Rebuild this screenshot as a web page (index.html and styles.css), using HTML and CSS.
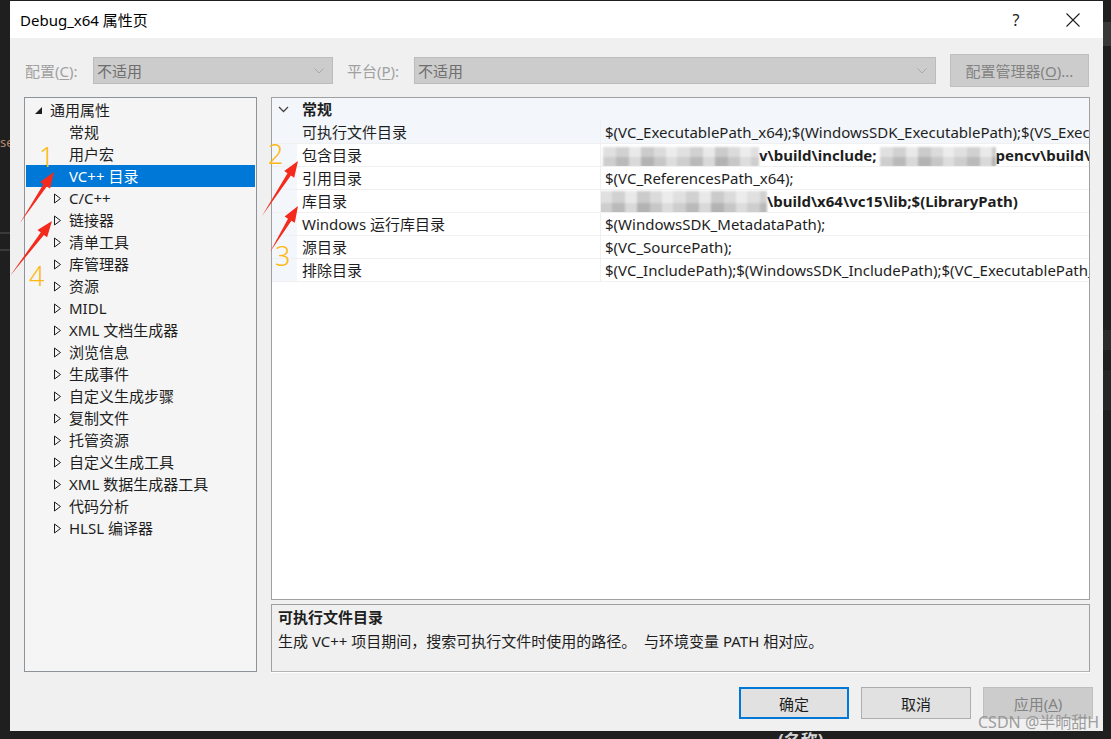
FILE: index.html
```html
<!DOCTYPE html>
<html lang="zh-CN">
<head>
<meta charset="utf-8">
<title>Debug_x64 属性页</title>
<link rel="stylesheet" href="styles.css">
</head>
<body>
<div class="bg-text se">se</div>
<div class="bg-line l1"></div>
<div class="bg-line l2"></div>
<div class="bg-band b1"></div>
<div class="bg-band b2"></div>
<div class="bg-band b3"></div>
<div class="bg-text under">(名称)</div>

<div class="dialog">
  <div class="titlebar">
    <div class="title">Debug_x64 属性页</div>
    <div class="tb-btn help">?</div>
    <div class="tb-btn close"><svg width="14" height="14" viewBox="0 0 14 14"><path d="M0.5 0.5 L13.5 13.5 M13.5 0.5 L0.5 13.5" stroke="#1e1e1e" stroke-width="1.1" fill="none"/></svg></div>
  </div>

  <div class="config">
    <div class="cfg-label">配置(<u>C</u>):</div>
    <div class="combo cfg"><span>不适用</span><svg width="10" height="6" viewBox="0 0 10 6"><path d="M0.5 0.5 L5 5 L9.5 0.5" stroke="#a8a8a8" fill="none"/></svg></div>
    <div class="cfg-label second">平台(<u>P</u>):</div>
    <div class="combo plat"><span>不适用</span><svg width="10" height="6" viewBox="0 0 10 6"><path d="M0.5 0.5 L5 5 L9.5 0.5" stroke="#a8a8a8" fill="none"/></svg></div>
    <div class="mgr-btn">配置管理器(<u>O</u>)...</div>
  </div>

  <div class="main">
    <div class="tree">
      <div class="node l0"><span class="tog"><svg width="9" height="9" viewBox="0 0 9 9"><path d="M8 1 L8 8 L1 8 Z" fill="#1e1e1e"/></svg></span>通用属性</div>
      <div class="node l1"><span class="tog"></span>常规</div>
      <div class="node l1"><span class="tog"></span>用户宏</div>
      <div class="node l1 sel"><span class="tog"></span>VC++ 目录</div>
      <div class="node l1"><span class="tog"><svg class="tri" width="9" height="11" viewBox="0 0 9 11"><path d="M1.5 1 L7.5 5.5 L1.5 10 Z" fill="none" stroke="#1e1e1e"/></svg></span>C/C++</div>
      <div class="node l1"><span class="tog"><svg class="tri" width="9" height="11" viewBox="0 0 9 11"><path d="M1.5 1 L7.5 5.5 L1.5 10 Z" fill="none" stroke="#1e1e1e"/></svg></span>链接器</div>
      <div class="node l1"><span class="tog"><svg class="tri" width="9" height="11" viewBox="0 0 9 11"><path d="M1.5 1 L7.5 5.5 L1.5 10 Z" fill="none" stroke="#1e1e1e"/></svg></span>清单工具</div>
      <div class="node l1"><span class="tog"><svg class="tri" width="9" height="11" viewBox="0 0 9 11"><path d="M1.5 1 L7.5 5.5 L1.5 10 Z" fill="none" stroke="#1e1e1e"/></svg></span>库管理器</div>
      <div class="node l1"><span class="tog"><svg class="tri" width="9" height="11" viewBox="0 0 9 11"><path d="M1.5 1 L7.5 5.5 L1.5 10 Z" fill="none" stroke="#1e1e1e"/></svg></span>资源</div>
      <div class="node l1"><span class="tog"><svg class="tri" width="9" height="11" viewBox="0 0 9 11"><path d="M1.5 1 L7.5 5.5 L1.5 10 Z" fill="none" stroke="#1e1e1e"/></svg></span>MIDL</div>
      <div class="node l1"><span class="tog"><svg class="tri" width="9" height="11" viewBox="0 0 9 11"><path d="M1.5 1 L7.5 5.5 L1.5 10 Z" fill="none" stroke="#1e1e1e"/></svg></span>XML 文档生成器</div>
      <div class="node l1"><span class="tog"><svg class="tri" width="9" height="11" viewBox="0 0 9 11"><path d="M1.5 1 L7.5 5.5 L1.5 10 Z" fill="none" stroke="#1e1e1e"/></svg></span>浏览信息</div>
      <div class="node l1"><span class="tog"><svg class="tri" width="9" height="11" viewBox="0 0 9 11"><path d="M1.5 1 L7.5 5.5 L1.5 10 Z" fill="none" stroke="#1e1e1e"/></svg></span>生成事件</div>
      <div class="node l1"><span class="tog"><svg class="tri" width="9" height="11" viewBox="0 0 9 11"><path d="M1.5 1 L7.5 5.5 L1.5 10 Z" fill="none" stroke="#1e1e1e"/></svg></span>自定义生成步骤</div>
      <div class="node l1"><span class="tog"><svg class="tri" width="9" height="11" viewBox="0 0 9 11"><path d="M1.5 1 L7.5 5.5 L1.5 10 Z" fill="none" stroke="#1e1e1e"/></svg></span>复制文件</div>
      <div class="node l1"><span class="tog"><svg class="tri" width="9" height="11" viewBox="0 0 9 11"><path d="M1.5 1 L7.5 5.5 L1.5 10 Z" fill="none" stroke="#1e1e1e"/></svg></span>托管资源</div>
      <div class="node l1"><span class="tog"><svg class="tri" width="9" height="11" viewBox="0 0 9 11"><path d="M1.5 1 L7.5 5.5 L1.5 10 Z" fill="none" stroke="#1e1e1e"/></svg></span>自定义生成工具</div>
      <div class="node l1"><span class="tog"><svg class="tri" width="9" height="11" viewBox="0 0 9 11"><path d="M1.5 1 L7.5 5.5 L1.5 10 Z" fill="none" stroke="#1e1e1e"/></svg></span>XML 数据生成器工具</div>
      <div class="node l1"><span class="tog"><svg class="tri" width="9" height="11" viewBox="0 0 9 11"><path d="M1.5 1 L7.5 5.5 L1.5 10 Z" fill="none" stroke="#1e1e1e"/></svg></span>代码分析</div>
      <div class="node l1"><span class="tog"><svg class="tri" width="9" height="11" viewBox="0 0 9 11"><path d="M1.5 1 L7.5 5.5 L1.5 10 Z" fill="none" stroke="#1e1e1e"/></svg></span>HLSL 编译器</div>
    </div>

    <div class="right">
      <div class="grid">
        <div class="grow head">
          <div class="gut"><svg width="11" height="7" viewBox="0 0 11 7"><path d="M1 1 L5.5 5.5 L10 1" fill="none" stroke="#444" stroke-width="1.3"/></svg></div>
          <div class="ghead">常规</div>
        </div>
        <div class="grow hl">
          <div class="gut"></div>
          <div class="gname">可执行文件目录</div>
          <div class="gval">$(VC_ExecutablePath_x64);$(WindowsSDK_ExecutablePath);$(VS_ExecutablePath_x64);$(FxCopDir);$(PATH);</div>
        </div>
        <div class="grow">
          <div class="gut"></div>
          <div class="gname">包含目录</div>
          <div class="gval b"><span class="mosaic m1"></span>v\build\include;<span class="mosaic m2"></span>pencv\build\include\opencv2;$(IncludePath)</div>
        </div>
        <div class="grow">
          <div class="gut"></div>
          <div class="gname">引用目录</div>
          <div class="gval">$(VC_ReferencesPath_x64);</div>
        </div>
        <div class="grow">
          <div class="gut"></div>
          <div class="gname">库目录</div>
          <div class="gval b"><span class="mosaic m3"></span>\build\x64\vc15\lib;$(LibraryPath)</div>
        </div>
        <div class="grow">
          <div class="gut"></div>
          <div class="gname">Windows 运行库目录</div>
          <div class="gval">$(WindowsSDK_MetadataPath);</div>
        </div>
        <div class="grow">
          <div class="gut"></div>
          <div class="gname">源目录</div>
          <div class="gval">$(VC_SourcePath);</div>
        </div>
        <div class="grow">
          <div class="gut"></div>
          <div class="gname">排除目录</div>
          <div class="gval">$(VC_IncludePath);$(WindowsSDK_IncludePath);$(VC_ExecutablePath_x64);</div>
        </div>
      </div>
      <div class="desc">
        <div class="desc-title">可执行文件目录</div>
        <div class="desc-text">生成 VC++ 项目期间，搜索可执行文件时使用的路径。&nbsp; 与环境变量 PATH 相对应。</div>
      </div>
    </div>
  </div>

  <div class="footer">
    <div class="btn default">确定</div>
    <div class="btn">取消</div>
    <div class="btn disabled">应用(<u>A</u>)</div>
  </div>
</div>

<svg class="arrows" width="1111" height="739" viewBox="0 0 1111 739">
  <polygon points="20,223 43.4,184.2 40.1,182.0 54,172 50.1,188.6 46.8,186.4" fill="#f42a1c"/>
  <polygon points="10,276 40.7,232.5 37.5,230.1 52,221 47.1,237.3 43.9,234.9" fill="#f42a1c"/>
  <polygon points="262,216 287.5,173.3 284.2,171.1 298,161 294.2,177.7 290.9,175.5" fill="#f42a1c"/>
  <polygon points="270,252 288.0,218.7 284.6,216.6 298,206 294.8,222.8 291.4,220.7" fill="#f42a1c"/>
</svg>
<div class="num n1">1</div>
<div class="num n2">2</div>
<div class="num n3">3</div>
<div class="num n4">4</div>
<div class="watermark">CSDN @半晌甜H</div>
</body>
</html>
```
FILE: styles.css
```css
* { box-sizing: border-box; }

body {
  margin: 0;
  width: 1111px;
  height: 739px;
  background: #1f1f1f;
  overflow: hidden;
  position: relative;
  font-family: "Noto Sans", "Noto Sans CJK SC", sans-serif;
  font-size: 15px;
  color: #1e1e1e;
}

u { text-decoration: underline; text-underline-offset: 2px; }

/* background bits behind the dialog */
.bg-text { position: absolute; z-index: 0; white-space: nowrap; }
.se { left: 0; top: 134px; font-size: 13px; color: #b8866a; line-height: 16px; }
.under { left: 778px; top: 727px; font-size: 17px; font-weight: bold; color: #d4d4d4; }
.bg-line { position: absolute; left: 0; width: 10px; height: 2px; background: #3a3a3a; z-index: 0; }
.bg-line.l1 { top: 232px; }
.bg-line.l2 { top: 249px; }
.bg-band { position: absolute; right: 0; width: 8px; z-index: 0; background: #2c2c2c; }
.bg-band.b1 { top: 22px; height: 24px; background: #383838; }
.bg-band.b2 { top: 330px; height: 20px; }
.bg-band.b3 { top: 370px; height: 40px; background: #272727; }

/* dialog */
.dialog {
  position: relative;
  z-index: 1;
  margin: 1px 0 0 10px;
  width: 1093px;
  height: 730px;
  background: #f0f0f0;
  display: flex;
  flex-direction: column;
}

.titlebar {
  flex: none;
  height: 37px;
  background: #fff;
  display: flex;
  align-items: center;
  padding-left: 10px;
}
.title { flex: 1; color: #000; font-size: 15px; }
.tb-btn { width: 36px; height: 37px; display: flex; align-items: center; justify-content: center; }
.help { margin-right: 21px; font-size: 16px; color: #222; }
.close { margin-right: 12px; }

.config {
  flex: none;
  display: flex;
  align-items: center;
  height: 33px;
  margin-top: 16px;
  padding-left: 15px;
}
.cfg-label { width: 68px; color: #a0a0a0; }
.cfg-label.second { width: 67px; margin-left: 14px; }
.combo {
  height: 27px;
  background: #cccccc;
  border: 1px solid #bcbcbc;
  display: flex;
  align-items: center;
  justify-content: space-between;
  padding: 0 8px 0 3px;
  color: #6e6e6e;
}
.combo.cfg { width: 240px; }
.combo.plat { width: 522px; }
.mgr-btn {
  margin-left: 14px;
  width: 139px;
  height: 33px;
  background: #cccccc;
  border: 1px solid #bfbfbf;
  color: #838383;
  display: flex;
  align-items: center;
  justify-content: center;
}

.main {
  flex: none;
  display: flex;
  gap: 14px;
  height: 575px;
  margin-top: 10px;
  padding-left: 14px;
}

.tree {
  width: 233px;
  border: 1px solid #8e9299;
  background: #f5f5f5;
  padding: 1px 1px;
}
.node {
  height: 22px;
  display: flex;
  align-items: center;
  white-space: nowrap;
  line-height: 20px;
}
.node.l0 { padding-left: 8px; }
.node.l1 { padding-left: 27px; }
.tog { width: 16px; flex: none; display: flex; align-items: center; }
.node.sel { background: #0078d7; color: #fff; }

.right {
  width: 819px;
  display: flex;
  flex-direction: column;
  gap: 4px;
}

.grid {
  height: 503px;
  border: 1px solid #a0a0a0;
  background: #fff;
  overflow: hidden;
}
.grow {
  height: 23px;
  display: flex;
  border-bottom: 1px solid #f0f0f0;
  line-height: 22px;
}
.grow.head { background: #f3f6fa; border-bottom-color: #f3f6fa; }
.gut {
  width: 25px;
  flex: none;
  background: #f3f6fa;
  display: flex;
  align-items: center;
  padding-left: 6px;
}
.ghead { padding-left: 5px; font-weight: bold; }
.gname {
  width: 304px;
  flex: none;
  padding-left: 5px;
  border-right: 1px solid #f0f0f0;
  white-space: nowrap;
}
.gval {
  flex: 1;
  padding-left: 4px;
  overflow: hidden;
  white-space: nowrap;
}
.grow.hl .gname, .grow.hl .gval { background: #f3f6fa; }
.b { font-weight: bold; }

.mosaic {
  display: inline-block;
  height: 20px;
  vertical-align: middle;
  filter: blur(1.2px);
  background:
    linear-gradient(180deg, rgba(255,255,255,0.25) 0 50%, rgba(0,0,0,0.04) 50% 100%),
    repeating-linear-gradient(90deg, #d6d6d6 0 13px, #c2c2c2 13px 26px, #e2e2e2 26px 38px, #bababa 38px 51px, #cfcfcf 51px 63px, #e6e6e6 63px 74px);
}
.mosaic.m1 { width: 156px; margin-left: -2px; }
.mosaic.m2 { width: 116px; margin-left: 3px; }
.mosaic.m3 { width: 168px; margin-left: -6px; height: 24px; }

.desc {
  height: 68px;
  border: 1px solid #a0a0a0;
  border-bottom-color: #b4b4b4;
  box-shadow: 0 1px 0 #ffffff;
  padding: 0 6px;
  line-height: 24px;
  background: #f0f0f0;
}
.desc-title { font-weight: bold; }

.footer {
  flex: none;
  display: flex;
  justify-content: flex-end;
  gap: 12px;
  margin-top: 15px;
  padding-right: 10px;
}
.btn {
  width: 110px;
  height: 32px;
  background: #e1e1e1;
  border: 1px solid #adadad;
  display: flex;
  align-items: center;
  justify-content: center;
}
.btn.default { border: 2px solid #0078d7; }
.btn.disabled { background: #cccccc; border-color: #bfbfbf; color: #838383; }

/* annotations over the screenshot */
.arrows { position: absolute; left: 0; top: 0; z-index: 2; pointer-events: none; }
.num {
  position: absolute;
  z-index: 2;
  font-size: 27px;
  line-height: 27px;
  color: #fdb913;
  font-family: "Noto Sans", sans-serif;
  font-weight: 300;
}
.n1 { left: 39px; top: 143px; }
.n2 { left: 268px; top: 140px; }
.n3 { left: 275px; top: 242px; }
.n4 { left: 29px; top: 262px; }

.watermark {
  position: absolute;
  z-index: 3;
  left: 978px;
  top: 709px;
  font-size: 16px;
  color: rgba(135, 135, 135, 0.8);
  white-space: nowrap;
}
```
